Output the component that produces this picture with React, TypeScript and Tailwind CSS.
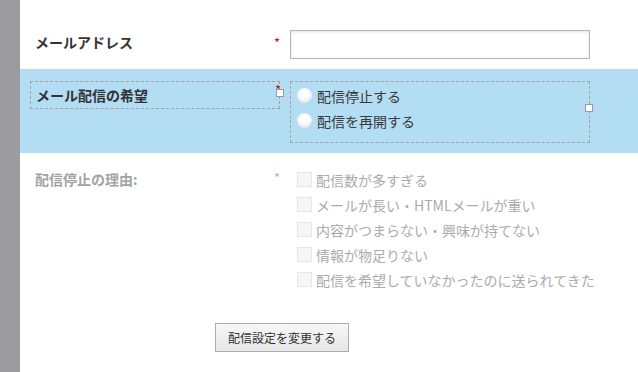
// 配信設定フォーム — 左に灰色の帯、メール配信の希望行を選択中（水色）で表示。
const REASONS = [
  '配信数が多すぎる',
  'メールが長い・HTMLメールが重い',
  '内容がつまらない・興味が持てない',
  '情報が物足りない',
  '配信を希望していなかったのに送られてきた',
];

const OPTIONS = ['配信停止する', '配信を再開する'];

export default function App() {
  return (
    <div className="flex h-screen w-full bg-white font-['Noto_Sans_CJK_JP',sans-serif] text-[14px] leading-[20px]">
      <div className="w-[20px] shrink-0 bg-[#9c9ba0]" />

      <div className="flex-1 flex flex-col">
        {/* メールアドレス */}
        <div className="mt-[30px] flex pl-[10px]">
          <div className="w-[250px] flex items-start pt-[2px]">
            <span className="flex-1 pl-[5px] font-bold text-[#333]">メールアドレス</span>
            <span className="w-[6px] mt-[4px] text-[13px] leading-[13px] text-[#b22222]">*</span>
          </div>
          <div className="ml-[10px] w-[300px] h-[29px] border border-[#b5b5b5] bg-white shadow-[inset_0_1px_3px_rgba(0,0,0,0.12)]" />
        </div>

        {/* メール配信の希望（選択中） */}
        <div className="mt-[10px] bg-[#b2ddf3] pt-[12px] pb-[10px] pl-[10px] flex items-start">
          <div className="relative w-[250px] h-[28px] border border-dashed border-[#a3a3a3] flex items-center">
            <span className="pl-[5px] font-bold text-[#333]">メール配信の希望</span>
            <span className="absolute left-[244px] top-[1px] text-[13px] leading-[13px] text-[#b22222]">*</span>
            <div className="absolute left-[245px] top-[7px] w-[8px] h-[8px] bg-white border border-[#9a9a9a]" />
          </div>
          <div className="relative ml-[10px] w-[300px] h-[62px] border border-dashed border-[#a3a3a3] pt-[1px] pl-[6px]">
            {OPTIONS.map((o) => (
              <div key={o} className="h-[25px] flex items-center gap-[5px]">
                <span className="w-[15px] h-[15px] rounded-full bg-[radial-gradient(circle_at_50%_40%,#ffffff_30%,#f0f0f0_60%,#cfcfcf_100%)]" />
                <span className="text-[#3a3a3a]">{o}</span>
              </div>
            ))}
            <div className="absolute left-[294px] top-[22px] w-[8px] h-[8px] bg-white border border-[#9a9a9a]" />
          </div>
        </div>

        {/* 配信停止の理由 */}
        <div className="mt-[14px] flex pl-[10px]">
          <div className="w-[250px] flex items-start pt-[2px]">
            <span className="flex-1 pl-[5px] font-bold text-[#a3a3a3]">配信停止の理由:</span>
            <span className="w-[6px] mt-[2px] text-[13px] leading-[13px] text-[#e3a3a3]">*</span>
          </div>
          <div className="ml-[10px] pl-[7px] flex flex-col">
            {REASONS.map((r) => (
              <div key={r} className="h-[25px] flex items-center gap-[4px]">
                <span className="w-[15px] h-[15px] border border-[#e6e6e6] bg-[#f6f6f6]" />
                <span className="text-[#ababab]">{r}</span>
              </div>
            ))}
          </div>
        </div>

        <div className="mt-[31px] pl-[195px]">
          <button className="w-[134px] h-[29px] border border-[#ababab] bg-gradient-to-b from-[#f7f7f7] to-[#e6e6e6] text-[12px] text-[#333]">
            配信設定を変更する
          </button>
        </div>
      </div>
    </div>
  );
}
